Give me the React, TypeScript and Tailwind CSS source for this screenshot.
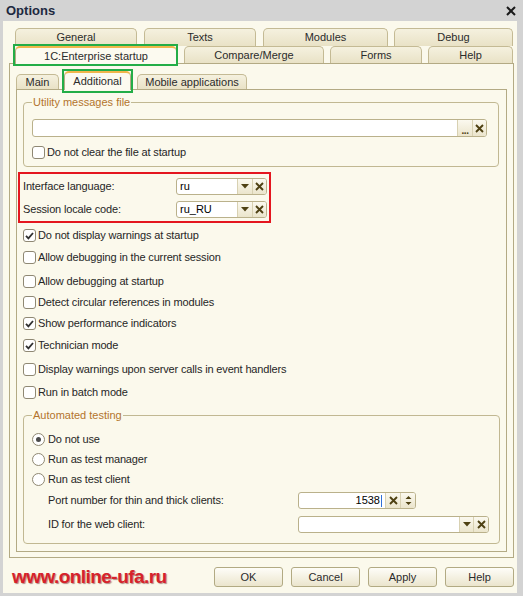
import type { ReactNode } from "react";

const TAB =
  "flex items-center justify-center rounded-t-[5px] border border-b-0 border-[#c4ba94] bg-gradient-to-b from-[#f5f1df] to-[#e9e2c6] text-[11px] leading-[13px] text-[#2b2b2b]";
const TAB_ON =
  "relative z-10 -mb-px flex items-center justify-center rounded-t-[5px] border border-b-0 border-[#b3aa84] border-t-2 border-t-[#f0b64c] bg-[#fcfaf0] text-[11px] leading-[13px] text-[#2b2b2b]";

function XIcon() {
  return (
    <svg width="9" height="9" viewBox="0 0 9 9">
      <path d="M1 1L8 8M8 1L1 8" stroke="#4e4113" strokeWidth="1.9" />
    </svg>
  );
}

function DownIcon() {
  return (
    <svg width="8" height="5" viewBox="0 0 8 5">
      <path d="M0 0H8L4 4.5Z" fill="#4e4113" />
    </svg>
  );
}

function SpinIcon() {
  return (
    <svg width="7" height="11" viewBox="0 0 7 11">
      <path d="M0.5 4L3.5 1L6.5 4Z M0.5 7L3.5 10L6.5 7Z" fill="#4e4113" />
    </svg>
  );
}

function Cell({ children, w = "w-[15px]" }: { children: ReactNode; w?: string }) {
  return (
    <span
      className={`flex ${w} items-center justify-center border-l border-[#d8d1b2] bg-gradient-to-b from-[#fbf9ef] to-[#ebe5cc]`}
    >
      {children}
    </span>
  );
}

function Field({
  className,
  value,
  right,
  children,
}: {
  className: string;
  value?: string;
  right?: boolean;
  children: ReactNode;
}) {
  return (
    <div
      className={`flex overflow-hidden rounded-[3px] border border-[#bab18b] bg-white ${className}`}
    >
      <div
        className={`flex flex-1 items-center px-[3px] text-[11px] leading-[13px] text-black ${
          right ? "justify-end" : ""
        }`}
      >
        {value}
        {right && <span className="ml-px h-[12px] w-px bg-[#2f6fd6]" />}
      </div>
      {children}
    </div>
  );
}

function Check({ checked, label, className = "" }: { checked?: boolean; label: string; className?: string }) {
  return (
    <div className={`flex h-[13px] items-center ${className}`}>
      <span className="flex h-[13px] w-[13px] shrink-0 items-center justify-center rounded-[3px] border border-[#8f8873] bg-white">
        {checked && (
          <svg width="9" height="8" viewBox="0 0 9 8">
            <path d="M1 3.8L3.4 6.3L8 1" fill="none" stroke="#303030" strokeWidth="1.8" />
          </svg>
        )}
      </span>
      <span className="ml-[2px] whitespace-nowrap text-[11px] leading-[13px] tracking-[-0.15px]">{label}</span>
    </div>
  );
}

function Radio({ on, label, className = "" }: { on?: boolean; label: string; className?: string }) {
  return (
    <div className={`flex h-[13px] items-center ${className}`}>
      <span className="flex h-[13px] w-[13px] shrink-0 items-center justify-center rounded-full border border-[#8f8873] bg-white">
        {on && <span className="h-[5px] w-[5px] rounded-full bg-[#4a4a4a]" />}
      </span>
      <span className="ml-[3px] whitespace-nowrap text-[11px] leading-[13px] tracking-[-0.15px]">{label}</span>
    </div>
  );
}

const CHECKS = [
  { label: "Do not display warnings at startup", checked: true, mt: "mt-[11px]" },
  { label: "Allow debugging in the current session", mt: "mt-[9px]" },
  { label: "Allow debugging at startup", mt: "mt-[11px]" },
  { label: "Detect circular references in modules", mt: "mt-[8px]" },
  { label: "Show performance indicators", checked: true, mt: "mt-[8px]" },
  { label: "Technician mode", checked: true, mt: "mt-[9px]" },
  { label: "Display warnings upon server calls in event handlers", mt: "mt-[11px]" },
  { label: "Run in batch mode", mt: "mt-[10px]" },
];

function DlgButton({ children }: { children: ReactNode }) {
  return (
    <button className="h-[20px] w-[69px] rounded-[3px] border border-[#b2aa83] bg-gradient-to-b from-[#fefdf8] to-[#ebe5cd] text-[11px] leading-[13px] text-[#2b2b2b]">
      {children}
    </button>
  );
}

export default function App() {
  return (
    <div className="flex h-[596px] w-[523px] flex-col bg-[#d3d3d3] font-['Liberation_Sans',Arial,sans-serif] text-[#262626]">
      <div className="flex h-[21px] shrink-0 items-center justify-between pl-[6px] pr-[7px]">
        <span className="text-[13px] font-bold leading-[15px] text-[#1d2940]">Options</span>
        <svg width="10" height="10" viewBox="0 0 10 10">
          <path d="M1 1L9 9M9 1L1 9" stroke="#1a1a1a" strokeWidth="2" />
        </svg>
      </div>

      <div className="mb-[3px] ml-[3px] mr-[6px] flex flex-1 flex-col bg-[#fbf9ec] pl-[6px] pr-[3px] pt-[7px]">
        <div className="flex h-[18px] pl-[6px]">
          <div className={`${TAB} w-[122px]`}>General</div>
          <div className={`${TAB} ml-[7px] w-[112px]`}>Texts</div>
          <div className={`${TAB} ml-[7px] w-[125px]`}>Modules</div>
          <div className={`${TAB} ml-[6px] w-[119px]`}>Debug</div>
        </div>
        <div className="flex h-[17px] items-end pl-[6px]">
          <div className={`${TAB_ON} h-[18px] w-[162px]`}>
            1C:Enterprise startup
            <span className="absolute -bottom-[2px] -left-[3px] -right-[2px] -top-[4px] border-2 border-[#23ad47]" />
          </div>
          <div className={`${TAB} ml-[7px] h-[17px] w-[140px]`}>Compare/Merge</div>
          <div className={`${TAB} ml-[6px] h-[17px] w-[92px]`}>Forms</div>
          <div className={`${TAB} ml-[6px] h-[17px] w-[85px]`}>Help</div>
        </div>

        <div className="flex h-[495px] flex-col border border-[#b3aa84] px-[6px]">
          <div className="flex h-[25px] shrink-0 items-end">
            <div className={`${TAB} h-[15px] w-[43px]`}>Main</div>
            <div className={`${TAB_ON} ml-[5px] h-[19px] w-[67px]`}>
              Additional
              <span className="absolute -bottom-[3px] -left-[3px] -right-[3px] -top-[4px] border-2 border-[#23ad47]" />
            </div>
            <div className={`${TAB} ml-[6px] h-[15px] w-[110px]`}>Mobile applications</div>
          </div>

          <div className="mb-[5px] flex flex-1 flex-col border border-[#b3aa84] pl-[6px] pr-[7px]">
            <fieldset className="mt-[6px] rounded-[4px] border border-[#c1b892] pb-[7px] pl-[8px] pr-[11px]">
              <legend className="px-[1px] text-[11px] leading-[13px] text-[#b3742d]">Utility messages file</legend>
              <Field className="mt-[10px] h-[18px] w-full">
                <Cell>
                  <span className="mt-[5px] text-[10px] font-bold leading-[10px] tracking-[-0.5px] text-[#4e4113]">...</span>
                </Cell>
                <Cell w="w-[14px]">
                  <XIcon />
                </Cell>
              </Field>
              <Check className="mt-[9px]" label="Do not clear the file at startup" />
            </fieldset>

            <div className="relative mt-[11px] flex flex-col gap-[6px]">
              <div className="flex h-[17px] items-center">
                <span className="w-[153px] text-[11px] leading-[13px] tracking-[-0.15px]">Interface language:</span>
                <Field className="h-[17px] w-[91px]" value="ru">
                  <Cell>
                    <DownIcon />
                  </Cell>
                  <Cell w="w-[14px]">
                    <XIcon />
                  </Cell>
                </Field>
              </div>
              <div className="flex h-[17px] items-center">
                <span className="w-[153px] text-[11px] leading-[13px] tracking-[-0.15px]">Session locale code:</span>
                <Field className="h-[17px] w-[91px]" value="ru_RU">
                  <Cell>
                    <DownIcon />
                  </Cell>
                  <Cell w="w-[14px]">
                    <XIcon />
                  </Cell>
                </Field>
              </div>
              <span className="absolute -left-[5px] -top-[6px] h-[51px] w-[253px] border-2 border-[#e4161f]" />
            </div>

            {CHECKS.map((c) => (
              <Check key={c.label} className={c.mt} label={c.label} checked={c.checked} />
            ))}

            <fieldset className="mt-[10px] rounded-[4px] border border-[#c1b892] pb-[10px] pl-[8px] pr-[10px]">
              <legend className="px-[1px] text-[11px] leading-[13px] text-[#b3742d]">Automated testing</legend>
              <Radio className="mt-[11px]" on label="Do not use" />
              <Radio className="mt-[7px]" label="Run as test manager" />
              <Radio className="mt-[7px]" label="Run as test client" />
              <div className="mt-[6px] flex h-[17px] items-center pl-[16px]">
                <span className="w-[250px] text-[11px] leading-[13px] tracking-[-0.15px]">
                  Port number for thin and thick clients:
                </span>
                <Field className="h-[17px] w-[118px]" value="1538" right>
                  <Cell>
                    <XIcon />
                  </Cell>
                  <Cell>
                    <SpinIcon />
                  </Cell>
                </Field>
              </div>
              <div className="mt-[7px] flex h-[17px] items-center pl-[16px]">
                <span className="w-[250px] text-[11px] leading-[13px] tracking-[-0.15px]">ID for the web client:</span>
                <Field className="h-[17px] w-[191px]">
                  <Cell w="w-[14px]">
                    <DownIcon />
                  </Cell>
                  <Cell>
                    <XIcon />
                  </Cell>
                </Field>
              </div>
            </fieldset>
          </div>
        </div>

        <div className="mt-[9px] flex h-[20px] items-center">
          <span className="ml-[3px] text-[19px] font-bold leading-[20px] tracking-[-0.55px] text-[#d6222b] [text-shadow:1px_1px_1px_rgba(90,0,0,0.45)]">
            www.online-ufa.ru
          </span>
          <div className="ml-auto flex gap-[8px]">
            <DlgButton>OK</DlgButton>
            <DlgButton>Cancel</DlgButton>
            <DlgButton>Apply</DlgButton>
            <DlgButton>Help</DlgButton>
          </div>
        </div>
      </div>
    </div>
  );
}
